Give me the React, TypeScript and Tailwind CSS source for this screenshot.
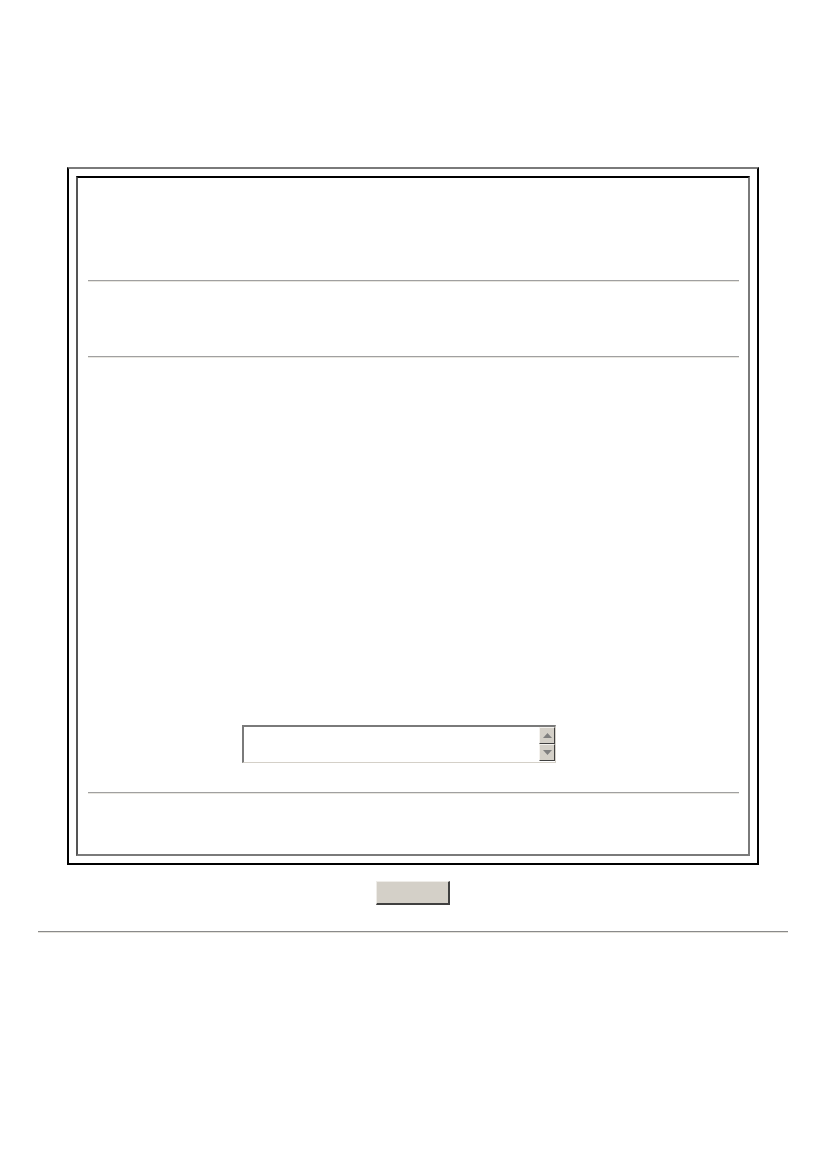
export default function App() {
  return (
    <div className="min-h-[1169px] w-[826px] bg-white font-['Liberation_Sans',sans-serif]">
      <div className="h-[167px]" />
      {/* outer framed table */}
      <div className="mx-auto w-[692px] h-[698px] border-2 border-black border-t-[#7a7a7a] p-[7px]">
        {/* inner cell */}
        <div className="flex h-full flex-col border-2 border-[#7a7a7a] border-t-black border-l-[#555] pl-[10px] pr-[9px]">
          <div className="h-[102px]" />
          <div className="h-[2px] border-t border-[#a0a0a0] border-b border-b-[#e8e6e0]" />
          <div className="h-[74px]" />
          <div className="h-[2px] border-t border-[#a0a0a0] border-b border-b-[#e8e6e0]" />
          <div className="h-[367px]" />
          {/* scrolling text box */}
          <div className="ml-[154px] flex h-[38px] w-[314px] border-l-2 border-t-2 border-[#7a7a7a] border-b border-b-[#d4d0c8] border-r border-r-[#d4d0c8] bg-white">
            <div className="flex-1" />
            <div className="flex w-[16px] flex-col">
              <div className="flex h-[17px] items-center justify-center border border-[#f4f2ee] border-b-[#404040] border-r-[#404040] bg-[#d4d0c8]">
                <svg width="9" height="5" viewBox="0 0 9 5">
                  <path d="M4.5 0 L9 5 L0 5 Z" fill="#808080" />
                </svg>
              </div>
              <div className="flex h-[17px] items-center justify-center border border-[#f4f2ee] border-b-[#404040] border-r-[#404040] bg-[#d4d0c8]">
                <svg width="9" height="5" viewBox="0 0 9 5">
                  <path d="M0 0 L9 0 L4.5 5 Z" fill="#808080" />
                </svg>
              </div>
            </div>
          </div>
          <div className="h-[29px]" />
          <div className="h-[2px] border-t border-[#a0a0a0] border-b border-b-[#e8e6e0]" />
        </div>
      </div>
      <div className="h-[16px]" />
      <div className="flex justify-center">
        <button className="h-[24px] w-[74px] border border-[#eeece8] border-b-2 border-r-2 border-b-[#404040] border-r-[#404040] bg-[#d4d0c8]" />
      </div>
      <div className="h-[26px]" />
      <div className="mx-[38px] h-[2px] border-t border-[#8a8a8a] border-b border-b-[#e4e2dc]" />
    </div>
  );
}
